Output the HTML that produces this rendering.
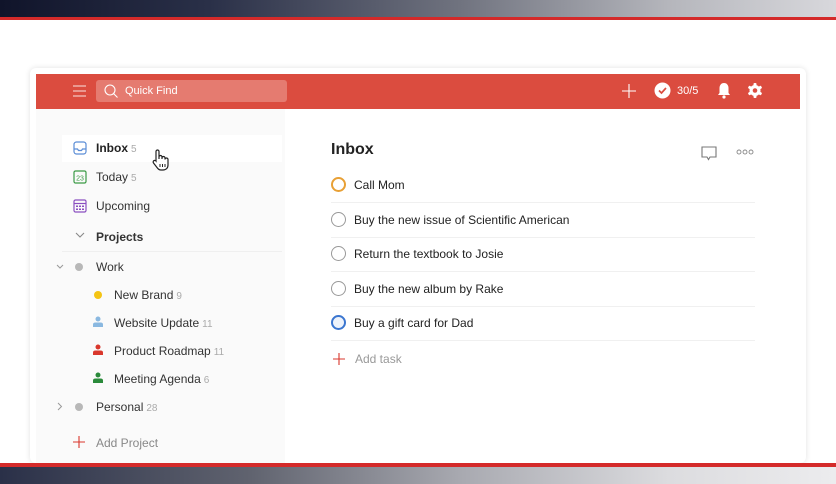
<!DOCTYPE html>
<html><head><meta charset="utf-8"><style>
*{margin:0;padding:0;box-sizing:border-box}
body{width:836px;height:484px;overflow:hidden;background:#fff;font-family:"Liberation Sans",sans-serif;position:relative;color:#222}
.topg{position:absolute;left:0;top:0;width:836px;height:17px;background:linear-gradient(90deg,#10142a 0%,#2a3048 25%,#70737f 55%,#b5b6bc 80%,#d8d8dc 100%)}
.topr{position:absolute;left:0;top:17px;width:836px;height:3px;background:#d42a2a}
.botr{position:absolute;left:0;top:463px;width:836px;height:4px;background:#d42a2a}
.botg{position:absolute;left:0;top:467px;width:836px;height:17px;background:linear-gradient(90deg,#2a3048 0%,#60636f 30%,#a8a9b0 55%,#dcdcdf 80%,#ececee 100%)}
.card{position:absolute;left:30px;top:68px;width:776px;height:395px;background:#fff;border-radius:6px;box-shadow:0 0 6px rgba(0,0,0,.12)}
.hdr{position:absolute;left:36px;top:74px;width:764px;height:35px;background:#db4c3f}
.side{position:absolute;left:36px;top:109px;width:249px;height:354px;background:#fafafa}
.abs{position:absolute}
.t{position:absolute;font-size:12px;color:#333;white-space:nowrap}
.c{color:#aaa;font-size:10px;margin-left:3px}
.task{position:absolute;left:331px;width:424px;height:35px;border-bottom:1px solid #f0f0f0}
.task .ck{position:absolute;left:0;top:9px;width:15px;height:15px;border:1.5px solid #999;border-radius:50%}
.task span{position:absolute;left:23px;top:10px;font-size:12px;color:#222}
</style></head><body>
<div class="topg"></div><div class="topr"></div>
<div class="card"></div>
<div class="hdr"></div>
<svg class="abs" style="left:72px;top:84px" width="16" height="14"><path d="M1 2h13M1 7h13M1 12h13" stroke="#fff" stroke-width="1.1" opacity=".85"/></svg>
<div class="abs" style="left:96px;top:80px;width:191px;height:22px;background:#e57b70;border-radius:3px"></div>
<svg class="abs" style="left:103px;top:83px" width="16" height="16"><circle cx="7" cy="7" r="5" fill="none" stroke="#fff" stroke-width="1.1"/><path d="M10.5 10.5l4 4" stroke="#fff" stroke-width="1.1"/></svg>
<div class="t" style="left:125px;top:85px;color:#fff;font-size:11px">Quick Find</div>
<svg class="abs" style="left:622px;top:84px" width="14" height="14"><path d="M7 0v14M0 7h14" stroke="#fff" stroke-width="1.1"/></svg>
<svg class="abs" style="left:654px;top:82px" width="17" height="17"><circle cx="8.5" cy="8.5" r="8" fill="#fff"/><path d="M5 8.5l2.5 2.5 4.5-5" stroke="#db4c3f" stroke-width="1.7" fill="none"/></svg>
<div class="t" style="left:677px;top:85px;color:#fff;font-size:11px">30/5</div>
<svg class="abs" style="left:717px;top:82px" width="14" height="17"><path d="M7 1c-3 0-4.5 2.5-4.5 5v5L1 13h12l-1.5-2V6C11.5 3.5 10 1 7 1z" fill="#fff"/><circle cx="7" cy="15" r="1.6" fill="#fff"/></svg>
<svg class="abs" style="left:747px;top:82px" width="16" height="17" viewBox="0 0 16 17"><g fill="#fff"><circle cx="8" cy="8.5" r="5.5"/><rect x="6.5" y="1" width="3" height="15" rx="1"/><rect x="6.5" y="1" width="3" height="15" rx="1" transform="rotate(60 8 8.5)"/><rect x="6.5" y="1" width="3" height="15" rx="1" transform="rotate(120 8 8.5)"/></g><circle cx="8" cy="8.5" r="2.3" fill="#db4c3f"/></svg>
<div class="side"></div>
<div class="abs" style="left:62px;top:135px;width:220px;height:27px;background:#fff"></div>
<svg class="abs" style="left:73px;top:141px" width="14" height="14"><rect x="1" y="1" width="12" height="12" rx="2.5" fill="none" stroke="#5b8dd6" stroke-width="1.2"/><path d="M1 8h3.5l1 1.5h3l1-1.5H13" stroke="#5b8dd6" stroke-width="1.2" fill="none"/></svg>
<div class="t" style="left:96px;top:141px;font-weight:bold;color:#222">Inbox<span class="c" style="font-weight:normal">5</span></div>
<svg class="abs" style="left:151px;top:148px" width="20" height="24" viewBox="0 0 20 24"><path d="M5 13V3.5a1.5 1.5 0 013 0V11V9a1.5 1.5 0 013 0v2-1a1.5 1.5 0 013 0v1.5a1.5 1.5 0 013 0V17c0 3-2 5-5 5h-2c-2 0-3-1-4-2.5L2.5 15a1.5 1.5 0 012.5-2z" fill="#fff" stroke="#222" stroke-width="1.2"/><path d="M9 16v3M11.5 16v3M14 16v3" stroke="#222" stroke-width="1"/></svg>
<svg class="abs" style="left:73px;top:170px" width="14" height="14"><rect x="1" y="1" width="12" height="12" rx="1.5" fill="none" stroke="#3a9a45" stroke-width="1.2"/><text x="7" y="10.5" font-size="7" text-anchor="middle" fill="#3a9a45" font-family="Liberation Sans">23</text></svg>
<div class="t" style="left:96px;top:170px">Today<span class="c">5</span></div>
<svg class="abs" style="left:73px;top:199px" width="14" height="14"><rect x="1" y="1" width="12" height="12" rx="1.5" fill="none" stroke="#8a4fc0" stroke-width="1.2"/><path d="M1 4.5h12" stroke="#8a4fc0" stroke-width="1.2"/><g fill="#8a4fc0"><rect x="3" y="6.5" width="2" height="1.5"/><rect x="6" y="6.5" width="2" height="1.5"/><rect x="9" y="6.5" width="2" height="1.5"/><rect x="3" y="9.5" width="2" height="1.5"/><rect x="6" y="9.5" width="2" height="1.5"/><rect x="9" y="9.5" width="2" height="1.5"/></g></svg>
<div class="t" style="left:96px;top:199px">Upcoming</div>
<svg class="abs" style="left:75px;top:232px" width="10" height="7"><path d="M1 1l4 4 4-4" stroke="#888" stroke-width="1.1" fill="none"/></svg>
<div class="t" style="left:96px;top:230px;font-weight:bold">Projects</div>
<div class="abs" style="left:62px;top:251px;width:220px;height:1px;background:#efefef"></div>
<svg class="abs" style="left:56px;top:264px" width="8" height="6"><path d="M1 1l3 3 3-3" stroke="#999" stroke-width="1" fill="none"/></svg>
<div class="abs" style="left:75px;top:263px;width:8px;height:8px;border-radius:50%;background:#b8b8b8"></div>
<div class="t" style="left:96px;top:260px">Work</div>
<div class="abs" style="left:94px;top:291px;width:8px;height:8px;border-radius:50%;background:#f4c414"></div>
<div class="t" style="left:114px;top:288px">New Brand<span class="c">9</span></div>
<svg class="abs" style="left:93px;top:316px" width="10" height="11"><circle cx="5" cy="3" r="2.5" fill="#8ab8e0"/><path d="M0 11V8.5Q0 6.5 2.5 6.5h5Q10 6.5 10 8.5V11z" fill="#8ab8e0"/></svg>
<div class="t" style="left:114px;top:316px">Website Update<span class="c">11</span></div>
<svg class="abs" style="left:93px;top:344px" width="10" height="11"><circle cx="5" cy="3" r="2.5" fill="#d9372c"/><path d="M0 11V8.5Q0 6.5 2.5 6.5h5Q10 6.5 10 8.5V11z" fill="#d9372c"/></svg>
<div class="t" style="left:114px;top:344px">Product Roadmap<span class="c">11</span></div>
<svg class="abs" style="left:93px;top:372px" width="10" height="11"><circle cx="5" cy="3" r="2.5" fill="#2a8a3a"/><path d="M0 11V8.5Q0 6.5 2.5 6.5h5Q10 6.5 10 8.5V11z" fill="#2a8a3a"/></svg>
<div class="t" style="left:114px;top:372px">Meeting Agenda<span class="c">6</span></div>
<svg class="abs" style="left:57px;top:402px" width="6" height="9"><path d="M1 1l3.5 3.5L1 8" stroke="#999" stroke-width="1" fill="none"/></svg>
<div class="abs" style="left:75px;top:403px;width:8px;height:8px;border-radius:50%;background:#b8b8b8"></div>
<div class="t" style="left:96px;top:400px">Personal<span class="c">28</span></div>
<svg class="abs" style="left:73px;top:436px" width="12" height="12"><path d="M6 0v12M0 6h12" stroke="#d9372c" stroke-width="1.1"/></svg>
<div class="t" style="left:96px;top:436px;color:#888">Add Project</div>
<div class="t" style="left:331px;top:141px;font-size:16px;font-weight:bold;color:#222">Inbox</div>
<svg class="abs" style="left:701px;top:146px" width="16" height="15"><path d="M1 1h14v10H9l-1.5 2.5L6 11H1z" fill="none" stroke="#777" stroke-width="1.1"/></svg>
<svg class="abs" style="left:736px;top:149px" width="18" height="6"><circle cx="3" cy="3" r="2" fill="none" stroke="#888" stroke-width=".9"/><circle cx="9" cy="3" r="2" fill="none" stroke="#888" stroke-width=".9"/><circle cx="15" cy="3" r="2" fill="none" stroke="#888" stroke-width=".9"/></svg>
<div class="task" style="top:168px"><div class="ck" style="border-color:#e8a035;border-width:2px"></div><span>Call Mom</span></div>
<div class="task" style="top:203px"><div class="ck"></div><span>Buy the new issue of Scientific American</span></div>
<div class="task" style="top:237px"><div class="ck"></div><span>Return the textbook to Josie</span></div>
<div class="task" style="top:272px"><div class="ck"></div><span>Buy the new album by Rake</span></div>
<div class="task" style="top:306px"><div class="ck" style="border-color:#3b76d0;border-width:2px;background:#eef3fb"></div><span>Buy a gift card for Dad</span></div>
<svg class="abs" style="left:333px;top:353px" width="12" height="12"><path d="M6 0v12M0 6h12" stroke="#d9372c" stroke-width="1.1"/></svg>
<div class="t" style="left:355px;top:352px;color:#999">Add task</div>
<div class="botr"></div><div class="botg"></div>
</body></html>
